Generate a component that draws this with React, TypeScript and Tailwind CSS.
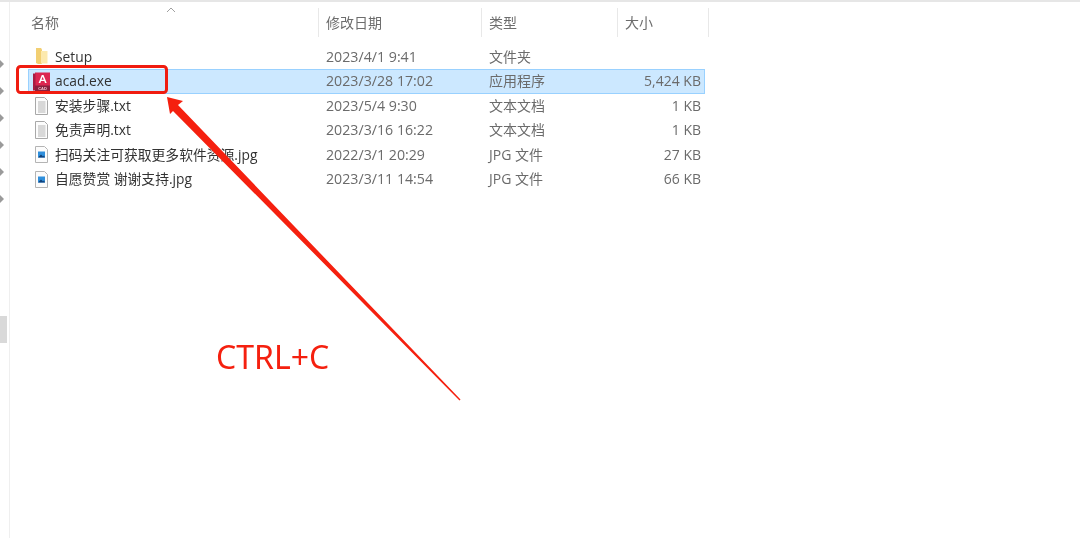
import React from "react";

interface FileRow {
  name: string;
  date: string;
  type: string;
  size: string;
  icon: "folder" | "acad" | "txt" | "jpg";
  selected?: boolean;
}

const rows: FileRow[] = [
  { name: "Setup", date: "2023/4/1 9:41", type: "文件夹", size: "", icon: "folder" },
  { name: "acad.exe", date: "2023/3/28 17:02", type: "应用程序", size: "5,424 KB", icon: "acad", selected: true },
  { name: "安装步骤.txt", date: "2023/5/4 9:30", type: "文本文档", size: "1 KB", icon: "txt" },
  { name: "免责声明.txt", date: "2023/3/16 16:22", type: "文本文档", size: "1 KB", icon: "txt" },
  { name: "扫码关注可获取更多软件资源.jpg", date: "2022/3/1 20:29", type: "JPG 文件", size: "27 KB", icon: "jpg" },
  { name: "自愿赞赏 谢谢支持.jpg", date: "2023/3/11 14:54", type: "JPG 文件", size: "66 KB", icon: "jpg" },
];

const FileIcon = ({ icon }: { icon: FileRow["icon"] }) => {
  if (icon === "folder") {
    return (
      <svg width="13" height="17" viewBox="0 0 13 17">
        <path d="M1 0h5l1 1.5V16H3l-2-1z" fill="#f2cf72" />
        <path d="M6 3h6.5v12.5H6z" fill="#fce9ae" />
      </svg>
    );
  }
  if (icon === "acad") {
    return (
      <svg width="17" height="19" viewBox="0 0 17 19">
        <path d="M2 0.5h15V14H2z" fill="#dc2650" />
        <path d="M0 1.5h2.5v17H0z" fill="#a81c42" />
        <path d="M2 13.5h15V19H2z" fill="#8a1f3e" />
        <path d="M5.6 11L8.8 3h1.7l3.2 8h-1.7l-.7-1.9H8l-.7 1.9zM8.5 7.8h2.3L9.65 4.8z" fill="#fff" />
        <text x="9.5" y="17.6" textAnchor="middle" fontSize="4" fontWeight="700" fill="#f0c4d0" fontFamily="Liberation Sans">CAD</text>
      </svg>
    );
  }
  if (icon === "txt") {
    return (
      <svg width="13" height="18" viewBox="0 0 13 18">
        <path d="M0.5 0.5h9l3 3v14h-12z" fill="#fcfcfc" stroke="#a8a8a8" />
        <path d="M3 5h7.5M3 7h7.5M3 9h7.5M3 11h7.5M3 13h7.5M3 15h7.5" stroke="#b4b4b4" />
      </svg>
    );
  }
  return (
    <svg width="13" height="17" viewBox="0 0 13 17">
      <path d="M0.5 0.5h9l3 3v13h-12z" fill="#fcfcfc" stroke="#b4b4b4" />
      <path d="M3 5.5h7v6H3z" fill="#2f8fdc" />
      <path d="M3 11.5l3-3 2 2 1-1 1 2z" fill="#0f3f78" />
    </svg>
  );
};

const cols = "grid grid-cols-[291px_163px_136px_87px]";

export default function App() {
  return (
    <div className="relative flex h-[538px] w-[1080px] overflow-hidden border-t-2 border-[#e6e6e6] bg-white font-['Open_Sans','Noto_Sans_CJK_SC',sans-serif] text-[14px] text-[#4a4a4a] blur-[0.3px]">
      {/* nav pane stub */}
      <div className="flex w-[10px] shrink-0 flex-col border-r border-[#efefef]">
        <div className="flex flex-col gap-[19px] pt-[58px]">
          {[0, 1, 2, 3, 4, 5].map((i) => (
            <div key={i} className="h-[8px] w-[4px] bg-[#9a9a9a] [clip-path:polygon(0_0,100%_50%,0_100%)]" />
          ))}
        </div>
        <div className="mt-[113px] h-[27px] w-[7px] bg-[#d9d9d9]" />
      </div>

      <div className="flex-1 pl-[18px]">
        {/* header */}
        <div className="relative mt-[6px] flex h-[29px] text-[#6d6d6d]">
          <div className="w-[291px] border-r border-[#e8e8e8] pl-[3px] leading-[29px]">名称</div>
          <div className="w-[163px] border-r border-[#e8e8e8] pl-[7px] leading-[29px]">修改日期</div>
          <div className="w-[136px] border-r border-[#e8e8e8] pl-[7px] leading-[29px]">类型</div>
          <div className="w-[91px] border-r border-[#e8e8e8] pl-[7px] leading-[29px]">大小</div>
          <svg className="absolute left-[138px] top-[-1px]" width="10" height="6" viewBox="0 0 10 6">
            <path d="M1 5l4-4 4 4" fill="none" stroke="#a0a0a0" />
          </svg>
        </div>

        {/* file rows */}
        <div className="mt-[7.5px] w-[677px]">
          {rows.map((r) => (
            <div
              key={r.name}
              className={`${cols} h-[24.5px] items-center leading-[24px] ${
                r.selected ? "bg-[#cce8ff] outline outline-1 -outline-offset-1 outline-[#99d1ff]" : ""
              }`}
            >
              <div className="flex items-center text-[13.8px] text-[#333333]">
                <div className="flex w-[27px] justify-center">
                  <FileIcon icon={r.icon} />
                </div>
                <span className="whitespace-nowrap">{r.name}</span>
              </div>
              <div className="pl-[7px] text-[14.2px] text-[#6b6b6b]">{r.date}</div>
              <div className="pl-[7px] text-[#6b6b6b]">{r.type}</div>
              <div className="pr-[4px] text-right text-[#6b6b6b]">{r.size}</div>
            </div>
          ))}
        </div>
      </div>

      {/* red annotation on top of the screenshot */}
      <svg className="absolute left-0 top-[-2px]" width="1080" height="538" viewBox="0 0 1080 538">
        <rect x="17.5" y="66.5" width="149" height="26" rx="3" fill="none" stroke="#f01c10" strokeWidth="3" />
        <path d="M167 97L183 101L178 105L460.5 399.5L459.5 400.5L173 111L170 114z" fill="#f5200f" />
      </svg>
      <div className="absolute left-[216px] top-[333px] font-['Noto_Sans',sans-serif] text-[32px] leading-[44px] text-[#f5200f]">
        CTRL+C
      </div>
    </div>
  );
}
